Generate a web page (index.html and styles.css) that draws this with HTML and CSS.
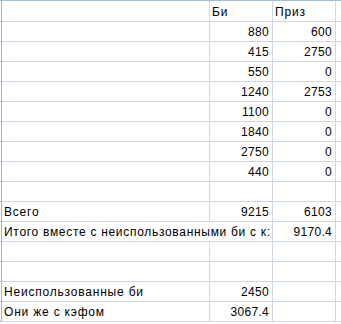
FILE: index.html
```html
<!DOCTYPE html>
<html>
<head>
<meta charset="utf-8">
<link rel="stylesheet" href="styles.css">
</head>
<body>
<div class="topbar"></div>
<div class="sheet">
  <div class="hdr"></div><div class="c txt"></div><div class="c txt">Би</div><div class="c txt">Приз</div><div class="c rest"></div>
  <div class="hdr"></div><div class="c"></div><div class="c num">880</div><div class="c num">600</div><div class="c rest"></div>
  <div class="hdr"></div><div class="c"></div><div class="c num">415</div><div class="c num">2750</div><div class="c rest"></div>
  <div class="hdr"></div><div class="c"></div><div class="c num">550</div><div class="c num">0</div><div class="c rest"></div>
  <div class="hdr"></div><div class="c"></div><div class="c num">1240</div><div class="c num">2753</div><div class="c rest"></div>
  <div class="hdr"></div><div class="c"></div><div class="c num">1100</div><div class="c num">0</div><div class="c rest"></div>
  <div class="hdr"></div><div class="c"></div><div class="c num">1840</div><div class="c num">0</div><div class="c rest"></div>
  <div class="hdr"></div><div class="c"></div><div class="c num">2750</div><div class="c num">0</div><div class="c rest"></div>
  <div class="hdr"></div><div class="c"></div><div class="c num">440</div><div class="c num">0</div><div class="c rest"></div>
  <div class="hdr"></div><div class="c"></div><div class="c"></div><div class="c"></div><div class="c rest"></div>
  <div class="hdr"></div><div class="c txt">Всего</div><div class="c num">9215</div><div class="c num">6103</div><div class="c rest"></div>
  <div class="hdr"></div><div class="c txt long span2">Итого вместе с неиспользованными би с к:</div><div class="c num">9170.4</div><div class="c rest"></div>
  <div class="hdr"></div><div class="c"></div><div class="c"></div><div class="c"></div><div class="c rest"></div>
  <div class="hdr"></div><div class="c"></div><div class="c"></div><div class="c"></div><div class="c rest"></div>
  <div class="hdr"></div><div class="c txt">Неиспользованные би</div><div class="c num">2450</div><div class="c"></div><div class="c rest"></div>
  <div class="hdr"></div><div class="c txt">Они же с кэфом</div><div class="c num">3067.4</div><div class="c"></div><div class="c rest"></div>
</div>
</body>
</html>
```

FILE: styles.css
```css
html, body {
  margin: 0;
  padding: 0;
  background: #ffffff;
  overflow: hidden;
}
body {
  font-family: "Liberation Sans", Arial, sans-serif;
  font-size: 12px;
  color: #000000;
}
.topbar {
  height: 1px;
  background: #a9bdd4;
}
.sheet {
  display: grid;
  grid-template-columns: 2px 208px 63px 63px 10px;
  grid-template-rows: 21px;
  grid-auto-rows: 20px;
}
.hdr {
  border-right: 1px solid #9eb6ce;
  border-bottom: 1px solid #9eb6ce;
  background: #ffffff;
}
.c {
  border-right: 1px solid #d0d7e5;
  border-bottom: 1px solid #d0d7e5;
  display: flex;
  align-items: flex-end;
  white-space: nowrap;
  overflow: hidden;
  line-height: 14px;
  padding-bottom: 2px;
}
.txt {
  padding-left: 2px;
  letter-spacing: 0.8px;
}
.long {
  letter-spacing: 0.7px;
}
.num {
  justify-content: flex-end;
  padding-right: 3px;
  letter-spacing: 0.3px;
}
.span2 {
  grid-column: span 2;
}
.rest {
  border-right: none;
}
```
